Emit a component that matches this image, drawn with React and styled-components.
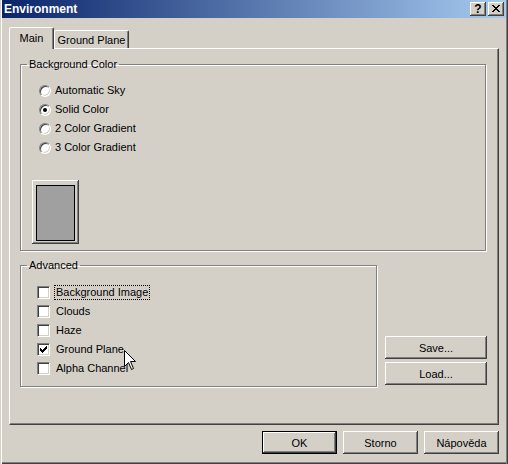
import React from "react";
import styled, { createGlobalStyle, css } from "styled-components";

const GlobalStyle = createGlobalStyle`
  html, body {
    margin: 0;
    padding: 0;
    background: #d4d0c8;
  }
  body {
    font-family: "Liberation Sans", Arial, sans-serif;
    font-size: 11px;
    color: #000;
  }
`;

const raised = css`
  box-shadow: inset -1px -1px #404040, inset 1px 1px #ffffff,
    inset -2px -2px #808080, inset 2px 2px #d4d0c8;
`;

const sunken = css`
  border: 1px solid;
  border-color: #808080 #ffffff #ffffff #808080;
  box-shadow: inset 1px 1px #404040, inset -1px -1px #d4d0c8;
`;

const Window = styled.div`
  position: relative;
  box-sizing: border-box;
  width: 508px;
  height: 464px;
  padding: 0 2px 2px 2px;
  background: #d4d0c8;
  box-shadow: inset 1px 0 #d4d0c8, inset 2px 0 #ffffff, inset -1px 0 #404040,
    inset -2px 0 #808080, inset 0 -1px #404040, inset 0 -2px #808080;
  display: flex;
  flex-direction: column;
`;

const TitleBar = styled.div`
  height: 18px;
  display: flex;
  align-items: center;
  padding: 0 2px;
  background: linear-gradient(to right, #0a246a, #a6caf0);
`;

const TitleText = styled.div`
  flex: 1;
  color: #fff;
  font-weight: bold;
  font-size: 12px;
  line-height: 18px;
`;

const CaptionButtons = styled.div`
  display: flex;
  gap: 2px;
`;

const CaptionButton = styled.div`
  width: 16px;
  height: 14px;
  background: #d4d0c8;
  ${raised};
  display: flex;
  align-items: center;
  justify-content: center;
  font-weight: bold;
  font-size: 12px;
  line-height: 14px;
  padding-bottom: 1px;
  box-sizing: border-box;
`;

const Body = styled.div`
  flex: 1;
  display: flex;
  flex-direction: column;
  padding: 9px 7px 8px 7px;
`;

const TabStrip = styled.div`
  display: flex;
  align-items: flex-end;
  height: 21px;
`;

const Tab = styled.div`
  position: relative;
  box-sizing: border-box;
  width: ${(p) => p.$width}px;
  text-align: center;
  background: #d4d0c8;
  border-left: 1px solid #fff;
  border-top: 1px solid #fff;
  border-right: 1px solid #404040;
  border-radius: 2px 2px 0 0;
  box-shadow: inset -1px 0 #808080;
  line-height: 13px;
  ${(p) =>
    p.$active
      ? css`
          height: 22px;
          margin-bottom: -1px;
          padding-top: 4px;
          z-index: 1;
        `
      : css`
          height: 18px;
          padding-top: 3px;
        `}
`;

const Panel = styled.div`
  box-sizing: border-box;
  height: 377px;
  border: 1px solid;
  border-color: #fff #404040 #404040 #fff;
  box-shadow: inset -1px -1px #808080;
  padding: 9px 11px 0 10px;
  display: flex;
  flex-direction: column;
`;

const GroupBox = styled.fieldset`
  margin: ${(p) => p.$margin || "0"};
  padding: ${(p) => p.$padding};
  border: 1px solid #808080;
  box-shadow: 1px 1px 0 #fff, inset 1px 1px 0 #fff;
  min-width: 0;
  ${(p) => p.$width && `width: ${p.$width}px; box-sizing: border-box;`}
`;

const Legend = styled.legend`
  margin-left: 6px;
  padding: 0 2px;
  line-height: 13px;
`;

const OptionList = styled.div`
  display: flex;
  flex-direction: column;
  padding-left: ${(p) => p.$indent || 0}px;
`;

const OptionRow = styled.div`
  display: flex;
  align-items: center;
  height: 19px;
`;

const Radio = styled.span`
  position: relative;
  box-sizing: border-box;
  width: 12px;
  height: 12px;
  border-radius: 50%;
  background: #fff;
  margin-right: 2px;
  ${sunken};
  ${(p) =>
    p.$checked &&
    css`
      &::after {
        content: "";
        position: absolute;
        left: 3px;
        top: 3px;
        width: 4px;
        height: 4px;
        border-radius: 50%;
        background: #000;
      }
    `}
`;

const CheckBox = styled.span`
  box-sizing: border-box;
  width: 13px;
  height: 13px;
  background: #fff;
  margin-right: 4px;
  display: flex;
  align-items: center;
  justify-content: center;
  ${sunken};
`;

const OptionLabel = styled.span`
  padding: 0 1px;
  border: 1px ${(p) => (p.$focused ? "dotted #000" : "solid transparent")};
  line-height: 13px;
`;

const SwatchButton = styled.div`
  box-sizing: border-box;
  width: 47px;
  height: 64px;
  margin: 23px 0 0 11px;
  padding: 5px 4px 3px 4px;
  ${raised};
`;

const SwatchFill = styled.div`
  box-sizing: border-box;
  height: 100%;
  border: 1px solid #000;
  background: #a0a0a0;
`;

const LowerRow = styled.div`
  display: flex;
  align-items: flex-end;
`;

const SideButtons = styled.div`
  display: flex;
  flex-direction: column;
  gap: 3px;
  width: 102px;
  margin: 0 0 2px auto;
`;

const Button = styled.div`
  box-sizing: border-box;
  width: ${(p) => p.$width || 75}px;
  height: 23px;
  display: flex;
  align-items: center;
  justify-content: center;
  background: #d4d0c8;
  ${(p) =>
    p.$default
      ? css`
          border: 1px solid #000;
          ${raised};
        `
      : raised};
`;

const Footer = styled.div`
  display: flex;
  justify-content: flex-end;
  gap: 6px;
  margin-top: 6px;
`;

const Pointer = styled.svg`
  position: absolute;
  left: 124px;
  top: 350px;
`;

const radios = [
  { label: "Automatic Sky" },
  { label: "Solid Color", checked: true },
  { label: "2 Color Gradient" },
  { label: "3 Color Gradient" },
];

const checks = [
  { label: "Background Image", focused: true },
  { label: "Clouds" },
  { label: "Haze" },
  { label: "Ground Plane", checked: true },
  { label: "Alpha Channel" },
];

function CloseGlyph() {
  return (
    <svg width="8" height="7" viewBox="0 0 8 7" shapeRendering="crispEdges">
      <path d="M0 0h2v1H0zM6 0h2v1H6zM1 1h2v1H1zM5 1h2v1H5zM2 2h4v1H2zM3 3h2v1H3zM2 4h4v1H2zM1 5h2v1H1zM5 5h2v1H5zM0 6h2v1H0zM6 6h2v1H6z" fill="#000" />
    </svg>
  );
}

function CheckMark() {
  return (
    <svg width="7" height="7" viewBox="0 0 7 7" shapeRendering="crispEdges">
      <path d="M6 0h1v3H6zM5 1h1v3H5zM4 2h1v3H4zM3 3h1v3H3zM2 4h1v3H2zM1 3h1v3H1zM0 2h1v3H0z" fill="#000" />
    </svg>
  );
}

function App() {
  return (
    <>
      <GlobalStyle />
      <Window>
        <TitleBar>
          <TitleText>Environment</TitleText>
          <CaptionButtons>
            <CaptionButton>?</CaptionButton>
            <CaptionButton>
              <CloseGlyph />
            </CaptionButton>
          </CaptionButtons>
        </TitleBar>
        <Body>
          <TabStrip>
            <Tab $active $width={45}>Main</Tab>
            <Tab $width={75}>Ground Plane</Tab>
          </TabStrip>
          <Panel>
            <GroupBox $padding="10px 0 6px 0" $margin="0 1px 0 0">
              <Legend>Background Color</Legend>
              <OptionList $indent={18}>
                {radios.map((r) => (
                  <OptionRow key={r.label}>
                    <Radio $checked={r.checked} />
                    <OptionLabel>{r.label}</OptionLabel>
                  </OptionRow>
                ))}
              </OptionList>
              <SwatchButton>
                <SwatchFill />
              </SwatchButton>
            </GroupBox>
            <LowerRow>
              <GroupBox $padding="11px 0 8px 0" $margin="8px 0 0 0" $width={357}>
                <Legend>Advanced</Legend>
                <OptionList $indent={16}>
                  {checks.map((c) => (
                    <OptionRow key={c.label}>
                      <CheckBox>{c.checked && <CheckMark />}</CheckBox>
                      <OptionLabel $focused={c.focused}>{c.label}</OptionLabel>
                    </OptionRow>
                  ))}
                </OptionList>
              </GroupBox>
              <SideButtons>
                <Button $width={102}>Save...</Button>
                <Button $width={102}>Load...</Button>
              </SideButtons>
            </LowerRow>
          </Panel>
          <Footer>
            <Button $default>OK</Button>
            <Button>Storno</Button>
            <Button>Nápověda</Button>
          </Footer>
        </Body>
        <Pointer width="13" height="21" viewBox="0 0 13 21">
          <path
            d="M0.5 0.5 L0.5 16.5 L4.5 12.5 L7.5 19.5 L9.5 18.5 L6.5 11.5 L11.5 11.5 Z"
            fill="#fff"
            stroke="#000"
            strokeWidth="1"
          />
        </Pointer>
      </Window>
    </>
  );
}

export default App;
